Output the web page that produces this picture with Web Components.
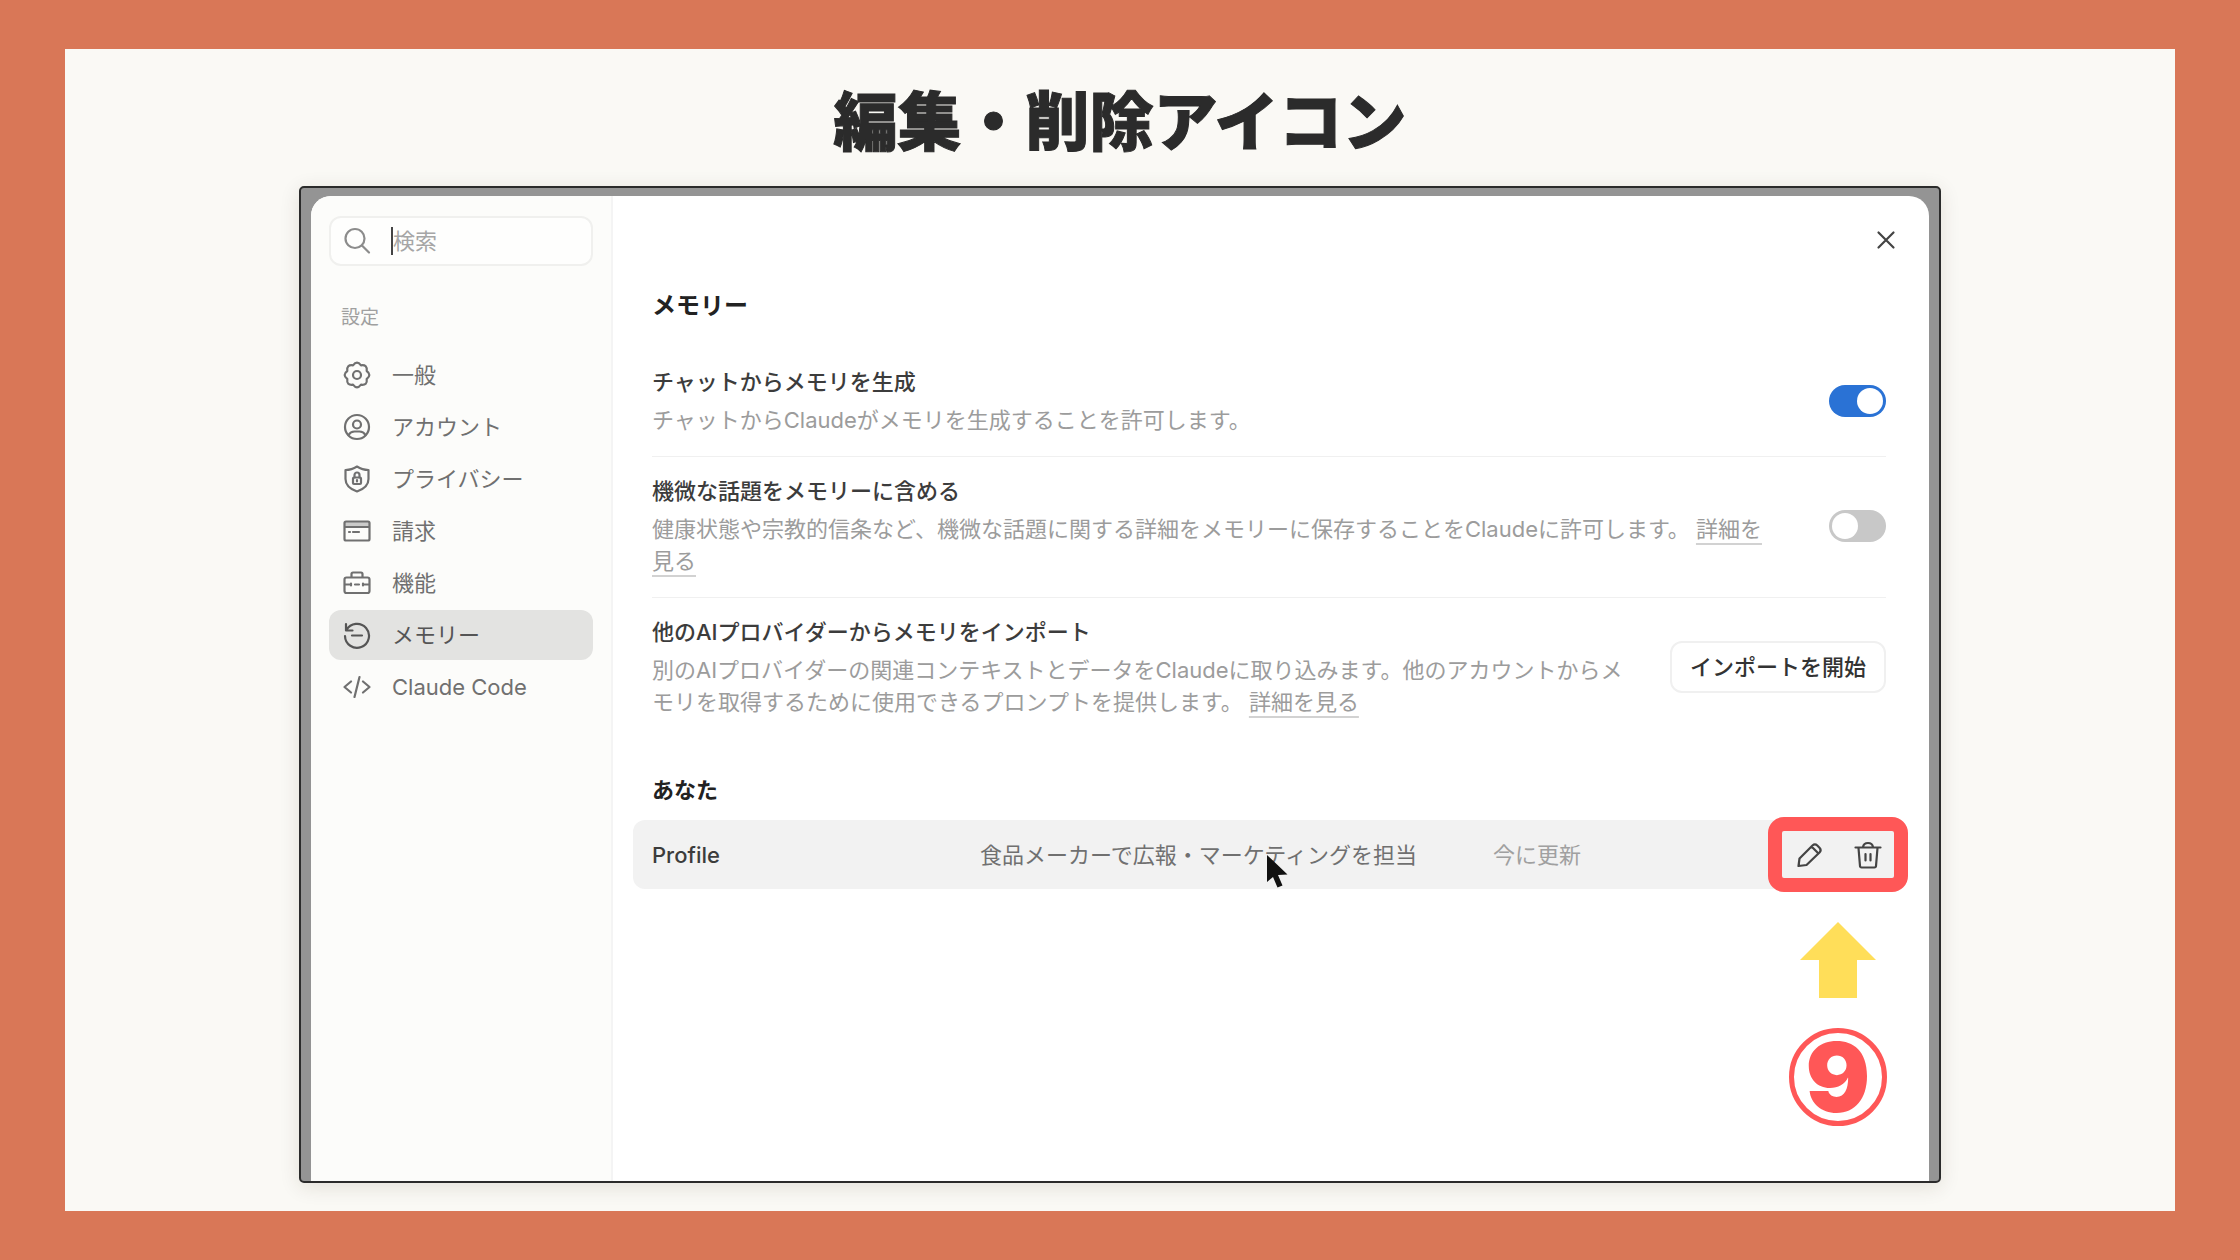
<!DOCTYPE html>
<html lang="ja">
<head>
<meta charset="UTF-8">
<meta name="viewport" content="width=device-width, initial-scale=1">
<title>編集・削除アイコン</title>
<style>
  body {
    margin: 0;
    font-family: Inter, "Noto Sans CJK JP", sans-serif;
    font-size: 22px;
    line-height: 32px;
    color: #333;
  }
</style>
</head>
<body>
<guide-slide>
  <span slot="title">編集・削除アイコン</span>
  <settings-dialog>
    <settings-nav slot="nav">
      <nav-item icon="gear">一般</nav-item>
      <nav-item icon="user">アカウント</nav-item>
      <nav-item icon="shield">プライバシー</nav-item>
      <nav-item icon="card">請求</nav-item>
      <nav-item icon="case">機能</nav-item>
      <nav-item icon="memory" active>メモリー</nav-item>
      <nav-item icon="code">Claude Code</nav-item>
    </settings-nav>
    <span slot="heading">メモリー</span>
    <setting-row>
      <span slot="label">チャットからメモリを生成</span>
      チャットからClaudeがメモリを生成することを許可します。
      <toggle-switch slot="control" label="チャットからメモリを生成" checked></toggle-switch>
    </setting-row>
    <setting-row>
      <span slot="label">機微な話題をメモリーに含める</span>
      健康状態や宗教的信条など、機微な話題に関する詳細をメモリーに保存することをClaudeに許可します。 <more-link>詳細を見る</more-link>
      <toggle-switch slot="control" label="機微な話題をメモリーに含める"></toggle-switch>
    </setting-row>
    <setting-row>
      <span slot="label">他のAIプロバイダーからメモリをインポート</span>
      別のAIプロバイダーの関連コンテキストとデータをClaudeに取り込みます。他のアカウントからメモリを取得するために使用できるプロンプトを提供します。 <more-link>詳細を見る</more-link>
      <outline-button slot="control">インポートを開始</outline-button>
    </setting-row>
    <memory-list slot="memories">
      <span slot="heading">あなた</span>
      <span slot="name">Profile</span>
      <span slot="summary">食品メーカーで広報・マーケティングを担当</span>
      <span slot="updated">今に更新</span>
      <step-callout slot="callout">9</step-callout>
    </memory-list>
  </settings-dialog>
</guide-slide>

<script>
const icons = {
  search: '<circle cx="12" cy="11.500" r="9.500"/><path d="M19 18.500L26 25.500"/>',
  gear: '<path d="M10 4.300Q14-1 18 4.300 24.600 3.400 23.700 10 29 14 23.700 18 24.600 24.600 18 23.700 14 29 10 23.700 3.400 24.600 4.300 18-1 14 4.300 10 3.400 3.400 10 4.300z"/><circle cx="14" cy="14" r="4"/>',
  user: '<circle cx="14" cy="14" r="12"/><circle cx="14" cy="11.500" r="4"/><path d="M5.500 22c1.500-2.500 3.500-3.500 6-3.500h5c2.500 0 4.500 1 6 3.500"/>',
  shield: '<path d="M14 1.500c3 2 7 3.500 11.500 3.500v9c0 6-4.500 10-11.500 12.500C7 24 2.500 20 2.500 14V5c4.500 0 8.500-1.500 11.500-3.500z"/><rect x="10" y="12.500" width="8" height="6.500" rx="1"/><path d="M11.500 12.500v-2.500a2.500 2.500 0 0 1 5 0v2.500M14 15v1.500"/>',
  card: '<path d="M2 5h24v5H2z" fill="currentColor" fill-opacity="0.35" stroke="none"/><rect x="1.500" y="4.500" width="25" height="19" rx="1.500"/><path d="M2 10h24M6 15h1M10 15h6"/>',
  case: '<rect x="1.500" y="8.500" width="25" height="15.500" rx="2"/><path d="M8.500 8V5a1.500 1.500 0 0 1 1.500-1.500h8A1.500 1.500 0 0 1 19.500 5V8M2 15.500h6M12 15.500h4M20 15.500h6M8 14.500v2M20 14.500v2"/>',
  memory: '<path d="M3 3v6.500h6.500M3.500 9A12 12 0 1 1 2 15M9 14.500h10"/>',
  code: '<path d="M8 8.500L1.500 14l6.500 5.500M20 8.500L26.500 14l-6.500 5.500M16.500 4l-5 20"/>',
  close: '<path d="M6.500 6.500l15 15M21.500 6.500l-15 15"/>',
  pencil: '<path d="M2.500 25l1-7.500L16.500 4.500a3.500 3.500 0 0 1 4.800 0l2.200 2.200a3.500 3.500 0 0 1 0 4.800L10.500 24zM15.500 5.500l7 7"/>',
  trash: '<path d="M1.500 6.500h25M9 6C9.500 3 11 2 14 2s4.500 1 5 4M4.500 7L6 25a1.500 1.500 0 0 0 1.500 1.500h13A1.500 1.500 0 0 0 22 25l1.500-18M11.500 13v6.500M16.500 13v6.500"/>'
};

function icon(name, size = 28) {
  return `<svg width="${size}" height="${size}" viewBox="0 0 28 28" fill="none" stroke="currentColor" stroke-width="2.2" stroke-linejoin="round" stroke-linecap="round" aria-hidden="true">${icons[name]}</svg>`;
}

// Orange slide border with a title and the captured dialog below it
class GuideSlide extends HTMLElement {
  constructor() {
    super();
    this.attachShadow({ mode: 'open' });
    this.shadowRoot.innerHTML = `
      <style>
        :host {
          display: flex;
          box-sizing: border-box;
          min-height: 100vh;
          padding: 49px 65px;
          background: #d97757;
        }
        .paper {
          flex: 1;
          display: flex;
          flex-direction: column;
          padding: 20px 234px 28px;
          background: #faf9f5;
        }
        h1 {
          margin: 0 0 21px;
          font-family: "Noto Sans CJK JP", sans-serif;
          font-size: 64px;
          font-weight: 900;
          line-height: 96px;
          text-align: center;
          color: #2b2b2b;
          -webkit-text-stroke: 1px #2b2b2b;
        }
        .shot {
          flex: 1;
          display: flex;
          padding: 8px 10px 0;
          border: 2px solid #2b2b2b;
          border-radius: 5px;
          overflow: hidden;
          background: #949494;
          box-shadow: 0 4px 20px rgba(60, 40, 20, 0.12);
        }
      </style>
      <main class="paper">
        <h1><slot name="title"></slot></h1>
        <div class="shot"><slot></slot></div>
      </main>
    `;
  }
}

class SettingsDialog extends HTMLElement {
  constructor() {
    super();
    this.attachShadow({ mode: 'open' });
    this.shadowRoot.innerHTML = `
      <style>
        :host {
          flex: 1;
          display: flex;
          border-radius: 20px 20px 0 0;
          overflow: hidden;
          background: #fff;
        }
        .content {
          flex: 1;
          min-width: 0;
          padding: 27px 43px 0 39px;
        }
        header {
          display: flex;
          justify-content: flex-end;
          margin-right: -17px;
        }
        .close {
          display: flex;
          align-items: center;
          justify-content: center;
          width: 34px;
          height: 34px;
          padding: 0;
          border: 0;
          background: none;
          color: #444;
          cursor: pointer;
        }
        h2 {
          margin: 33px 0 26px;
          font-size: 24px;
          font-weight: 700;
          line-height: 32px;
          color: #222;
        }
      </style>
      <slot name="nav"></slot>
      <section class="content">
        <header><button class="close" aria-label="閉じる">${icon('close')}</button></header>
        <h2><slot name="heading"></slot></h2>
        <slot></slot>
        <slot name="memories"></slot>
      </section>
    `;
  }
}

class SettingsNav extends HTMLElement {
  constructor() {
    super();
    this.attachShadow({ mode: 'open' });
    this.shadowRoot.innerHTML = `
      <style>
        :host {
          flex: none;
          box-sizing: border-box;
          width: 302px;
          padding: 20px 18px;
          border-right: 2px solid #f4f4f4;
          background: #fcfcfa;
        }
        .search {
          display: flex;
          align-items: center;
          box-sizing: border-box;
          height: 50px;
          padding: 0 12px;
          border: 2px solid #f0f0ee;
          border-radius: 12px;
          background: #fefefd;
          color: #8c8c8c;
        }
        .caret {
          width: 2px;
          height: 28px;
          margin-left: 20px;
          background: #444;
        }
        input {
          flex: 1;
          min-width: 0;
          padding: 0;
          border: 0;
          outline: 0;
          background: none;
          font: inherit;
          color: #333;
        }
        input::placeholder {
          color: #a6a6a6;
          opacity: 1;
        }
        h3 {
          margin: 38px 12px 18px;
          font-size: 19px;
          font-weight: 400;
          line-height: 28px;
          color: #a0a0a0;
        }
        nav {
          display: flex;
          flex-direction: column;
          gap: 2px;
        }
      </style>
      <label class="search">
        ${icon('search')}
        <span class="caret"></span>
        <input type="text" placeholder="検索" aria-label="検索">
      </label>
      <h3>設定</h3>
      <nav><slot></slot></nav>
    `;
  }
}

class NavItem extends HTMLElement {
  constructor() {
    super();
    this.attachShadow({ mode: 'open' });
  }

  connectedCallback() {
    this.shadowRoot.innerHTML = `
      <style>
        :host { display: block; }
        a {
          display: flex;
          align-items: center;
          gap: 21px;
          height: 50px;
          padding: 0 14px;
          border-radius: 12px;
          color: #707070;
          text-decoration: none;
        }
        :host([active]) a {
          background: #e3e3e1;
          color: #555;
        }
      </style>
      <a href="#${this.getAttribute('icon')}">${icon(this.getAttribute('icon'))}<slot></slot></a>
    `;
  }
}

class SettingRow extends HTMLElement {
  constructor() {
    super();
    this.attachShadow({ mode: 'open' });
    this.shadowRoot.innerHTML = `
      <style>
        :host {
          display: flex;
          align-items: center;
          gap: 32px;
          padding: 18px 0 20px;
          border-bottom: 1px solid #f0f0f0;
        }
        :host(:last-of-type) { border-bottom: 0; }
        .text {
          flex: 1;
          min-width: 0;
        }
        h3 {
          margin: 0 0 6px;
          font-size: 22px;
          font-weight: 500;
          line-height: 32px;
          color: #3c3c3c;
        }
        p {
          margin: 0;
          color: #9c9c9c;
        }
      </style>
      <div class="text">
        <h3><slot name="label"></slot></h3>
        <p><slot></slot></p>
      </div>
      <slot name="control"></slot>
    `;
  }
}

class MoreLink extends HTMLElement {
  constructor() {
    super();
    this.attachShadow({ mode: 'open' });
    this.shadowRoot.innerHTML = `
      <style>
        a {
          color: #9c9c9c;
          text-decoration: underline 2px #d2d2d2;
          text-underline-offset: 6px;
        }
      </style>
      <a href="#more"><slot></slot></a>
    `;
  }
}

class ToggleSwitch extends HTMLElement {
  constructor() {
    super();
    this.attachShadow({ mode: 'open' });
  }

  connectedCallback() {
    this.shadowRoot.innerHTML = `
      <style>
        :host {
          flex: none;
          display: flex;
          margin-left: 20px;
        }
        input {
          appearance: none;
          display: flex;
          align-items: center;
          box-sizing: border-box;
          width: 57px;
          height: 32px;
          margin: 0;
          padding: 0 3px;
          border-radius: 16px;
          background: #c8c8c8;
          cursor: pointer;
        }
        input::before {
          content: "";
          width: 26px;
          height: 26px;
          border-radius: 50%;
          background: #fff;
        }
        input:checked {
          justify-content: flex-end;
          background: #2a72d5;
        }
      </style>
      <input type="checkbox" role="switch" aria-label="${this.getAttribute('label')}">
    `;
    this.shadowRoot.querySelector('input').checked = this.hasAttribute('checked');
  }
}

class OutlineButton extends HTMLElement {
  constructor() {
    super();
    this.attachShadow({ mode: 'open' });
    this.shadowRoot.innerHTML = `
      <style>
        :host { flex: none; }
        button {
          display: block;
          height: 52px;
          padding: 0 18px;
          border: 2px solid #f0f0f0;
          border-radius: 12px;
          background: #fff;
          font: inherit;
          font-weight: 500;
          color: #333;
          cursor: pointer;
        }
      </style>
      <button><slot></slot></button>
    `;
  }
}

class MemoryList extends HTMLElement {
  constructor() {
    super();
    this.attachShadow({ mode: 'open' });
    this.shadowRoot.innerHTML = `
      <style>
        :host { display: block; }
        h3 {
          margin: 36px 0 14px;
          font-size: 22px;
          font-weight: 700;
          line-height: 32px;
          color: #222;
        }
        .list {
          position: relative;
          margin: 0 -19px;
        }
        table {
          width: 100%;
          table-layout: fixed;
          border-spacing: 0;
          border-radius: 12px;
          background: #f2f2f2;
        }
        th, td {
          height: 69px;
          padding: 0;
          font-weight: 400;
          text-align: left;
          color: #707070;
        }
        th {
          width: 328px;
          padding-left: 19px;
          font-weight: 500;
          color: #3c3c3c;
        }
        .summary { width: 513px; }
        .updated { color: #a0a0a0; }
        .actions {
          width: 140px;
          padding-right: 19px;
        }
        .actions div {
          display: flex;
          justify-content: flex-end;
          gap: 22px;
        }
        button {
          display: flex;
          align-items: center;
          justify-content: center;
          width: 36px;
          height: 36px;
          padding: 0;
          border: 0;
          background: none;
          color: #444;
          cursor: pointer;
        }
        .cursor {
          position: absolute;
          left: 633px;
          top: 33px;
        }
      </style>
      <h3><slot name="heading"></slot></h3>
      <div class="list">
        <table>
          <tr>
            <th scope="row"><slot name="name"></slot></th>
            <td class="summary"><slot name="summary"></slot></td>
            <td class="updated"><slot name="updated"></slot></td>
            <td class="actions">
              <div>
                <button aria-label="編集">${icon('pencil')}</button>
                <button aria-label="削除">${icon('trash')}</button>
              </div>
            </td>
          </tr>
        </table>
        <svg class="cursor" width="24" height="36" viewBox="0 0 24 36" aria-hidden="true">
          <path d="M1 2v27l6-5 4.500 10.500 5-2L12 22l9.500-.500z" fill="#111"/>
        </svg>
        <slot name="callout"></slot>
      </div>
    `;
  }
}

// Red box over the row's actions, with an arrow and the step number under it
class StepCallout extends HTMLElement {
  constructor() {
    super();
    this.attachShadow({ mode: 'open' });
    this.shadowRoot.innerHTML = `
      <style>
        :host {
          position: absolute;
          top: -3px;
          right: -3px;
          display: flex;
          flex-direction: column;
          align-items: center;
          gap: 30px;
          pointer-events: none;
        }
        .box {
          box-sizing: border-box;
          width: 140px;
          height: 75px;
          border: 14px solid #ff5757;
          border-radius: 16px;
        }
        .number {
          display: flex;
          align-items: center;
          justify-content: center;
          box-sizing: border-box;
          width: 98px;
          height: 98px;
          border: 5px solid #ff5757;
          border-radius: 50%;
          font-family: Inter, sans-serif;
          font-size: 96px;
          font-weight: 900;
          line-height: 88px;
          color: #ff5757;
        }
      </style>
      <div class="box"></div>
      <svg width="76" height="76" viewBox="0 0 76 76" aria-hidden="true">
        <path d="M38 0l38 38H57v38H19V38H0z" fill="#ffde59"/>
      </svg>
      <div class="number"><slot></slot></div>
    `;
  }
}

customElements.define('guide-slide', GuideSlide);
customElements.define('settings-dialog', SettingsDialog);
customElements.define('settings-nav', SettingsNav);
customElements.define('nav-item', NavItem);
customElements.define('setting-row', SettingRow);
customElements.define('more-link', MoreLink);
customElements.define('toggle-switch', ToggleSwitch);
customElements.define('outline-button', OutlineButton);
customElements.define('memory-list', MemoryList);
customElements.define('step-callout', StepCallout);
</script>
</body>
</html>
